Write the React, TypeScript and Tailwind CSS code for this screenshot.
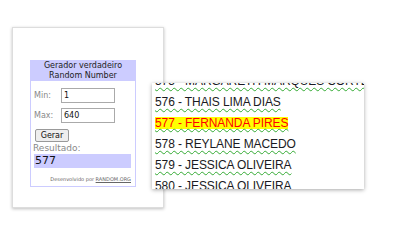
import React from "react";

const names = [
  { n: "575 - MARGARETH MARQUES CORTES", hl: false },
  { n: "576 - THAIS LIMA DIAS", hl: false },
  { n: "577 - FERNANDA PIRES", hl: true },
  { n: "578 - REYLANE MACEDO", hl: false },
  { n: "579 - JESSICA OLIVEIRA", hl: false },
  { n: "580 - JESSICA OLIVEIRA", hl: false },
];

const Widget = () => (
  <div className="w-[106px] border border-[#ccccff] bg-white text-[8px] leading-[10px] font-['DejaVu_Sans',sans-serif]">
    <div className="bg-[#ccccff] text-center text-[#222] h-[20px]">
      Gerador verdadeiro
      <br />
      Random Number
    </div>
    <div className="px-[2px] pt-[7px]">
      <div className="flex items-center h-[15px]">
        <span className="w-[28px] pl-[1px] text-[#888]">Min:</span>
        <div className="w-[54px] h-[15px] border border-[#aaa] pl-[2px] text-[#111] leading-[13px]">1</div>
      </div>
      <div className="flex items-center h-[15px] mt-[5px]">
        <span className="w-[28px] pl-[1px] text-[#888]">Max:</span>
        <div className="w-[54px] h-[15px] border border-[#aaa] pl-[2px] text-[#111] leading-[13px]">640</div>
      </div>
      <div className="mt-[6px] ml-[2px] w-[34px] h-[13px] border border-[#999] bg-[#eee] rounded-[2px] text-center text-[#111] leading-[11px]">
        Gerar
      </div>
      <div className="text-[#888] text-[9px] leading-[12px]">Resultado:</div>
      <div className="bg-[#ccccff] h-[14px] ml-[1px] mr-[2px] pl-[1px] text-[11px] leading-[14px] text-[#111]">577</div>
      <div className="text-right text-[5px] leading-[6px] text-[#666] pr-[2px] mt-[8px] pb-[4px]">
        Desenvolvido por <span className="underline">RANDOM.ORG</span>
      </div>
    </div>
  </div>
);

export default function App() {
  return (
    <div className="relative w-[400px] h-[240px] bg-white overflow-hidden">
      <div className="absolute left-[12px] top-[27px] w-[152px] h-[181px] bg-white border border-[#ddd] shadow-[0_1px_3px_rgba(0,0,0,0.25)] pl-[17px] pt-[32px]">
        <Widget />
      </div>
      <div className="absolute left-[152px] top-[83px] w-[212px] h-[106px] bg-white shadow-[0_1px_4px_rgba(0,0,0,0.35)] overflow-hidden font-['Liberation_Sans',sans-serif] text-[12px] tracking-[-0.1px] text-[#1a1a22]">
        <div className="-mt-[12px] pl-[3px]">
          {names.map((r) => (
            <div key={r.n} className="h-[21px] leading-[21px] whitespace-nowrap">
              <span
                className={
                  r.hl
                    ? "inline-block h-[12px] leading-[12px] bg-[#ffff00] text-[#ff0000] underline decoration-wavy decoration-[#3a3] decoration-1 underline-offset-1"
                    : "underline decoration-wavy decoration-[#3a3] decoration-1 underline-offset-2"
                }
              >
                {r.n}
              </span>
            </div>
          ))}
        </div>
      </div>
    </div>
  );
}
